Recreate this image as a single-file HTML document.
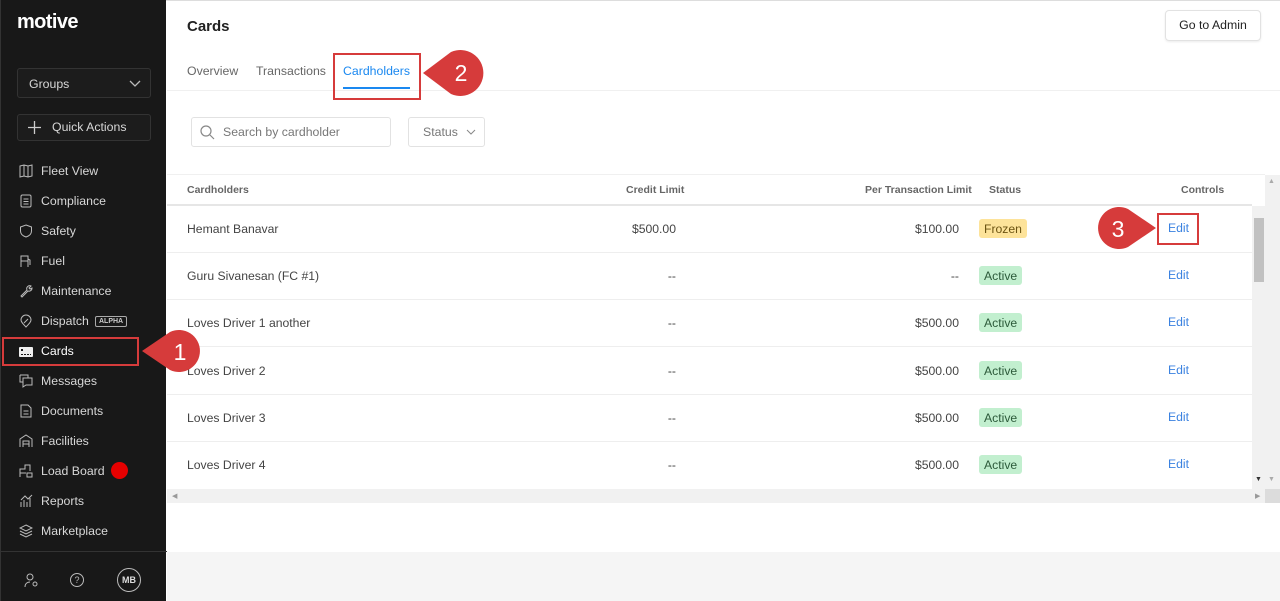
<!DOCTYPE html>
<html><head><meta charset="utf-8">
<style>
*{box-sizing:border-box;margin:0;padding:0}
body{width:1280px;height:601px;overflow:hidden;font-family:"Liberation Sans",Arial,sans-serif;background:#fff;position:relative;color:#333}
.a{position:absolute}
#sb{left:0;top:0;width:166px;height:601px;background:#181818;border-left:1px solid #333}
.nav{position:absolute;left:40px;font-size:12.3px;color:#d8d8d8;line-height:16px}
.ic{position:absolute;left:18px;width:14px;height:14px}
.th{position:absolute;top:184px;font-size:10.5px;font-weight:bold;color:#666}
.row{position:absolute;left:167px;width:1085px;height:47px;border-bottom:1px solid #eee}
.c{position:absolute;font-size:12.2px;color:#444;top:15px;line-height:16px}
.badge{position:absolute;left:812px;top:13px;height:19px;padding:0 5px;border-radius:3px;font-size:12.2px;line-height:19px;padding-top:1px}
.act{background:#c2efcf;color:#2c5a3a}
.edit{position:absolute;left:1001px;top:15px;color:#3b82e0;font-size:12.2px}
.box{position:absolute;border:2px solid #d63b3b}
</style></head><body>
<div class="a" style="left:166px;top:0;width:1114px;height:1px;background:#ddd"></div>
<div id="sb" class="a">
 <div class="a" style="left:16px;top:11px;font-size:20px;font-weight:bold;color:#fff;letter-spacing:-0.6px">motive</div>
 <div class="a" style="left:16px;top:68px;width:134px;height:30px;border:1px solid #333;border-radius:3px;background:#1c1c1c"></div>
 <div class="nav" style="left:28px;top:76px">Groups</div>
 <svg class="a" style="left:128px;top:80px" width="12" height="8"><path d="M1 1l5 5 5-5" stroke="#bbb" fill="none" stroke-width="1.3"/></svg>
 <div class="a" style="left:16px;top:114px;width:134px;height:27px;border:1px solid #333;border-radius:3px;background:#1c1c1c"></div>
 <svg class="a" style="left:27px;top:121px" width="13" height="13"><path d="M6.5 0v13M0 6.5h13" stroke="#ccc" stroke-width="1.3"/></svg>
 <div class="nav" style="left:51px;top:119px">Quick Actions</div>
 <svg class="ic" style="top:164px" viewBox="0 0 14 14"><path d="M1 2l4-1 4 1 4-1v11l-4 1-4-1-4 1z M5 1v11 M9 2v11" stroke="#bbb" fill="none"/></svg><div class="nav" style="top:163px">Fleet View</div>
 <svg class="ic" style="top:194px" viewBox="0 0 14 14"><rect x="2" y="1" width="10" height="12" rx="1.5" stroke="#bbb" fill="none"/><path d="M4.5 5h5M4.5 7.5h5M4.5 10h5" stroke="#bbb"/></svg><div class="nav" style="top:193px">Compliance</div>
 <svg class="ic" style="top:224px" viewBox="0 0 14 14"><path d="M7 1l5.5 2v4c0 3-2.5 5-5.5 6-3-1-5.5-3-5.5-6V3z" stroke="#bbb" fill="none"/></svg><div class="nav" style="top:223px">Safety</div>
 <svg class="ic" style="top:254px" viewBox="0 0 14 14"><path d="M2 13V2h7v11M2 7h7M9 5l2 1v5" stroke="#bbb" fill="none"/></svg><div class="nav" style="top:253px">Fuel</div>
 <svg class="ic" style="top:284px" viewBox="0 0 14 14"><path d="M2 12l6-6a3 3 0 014-4l-2 2 1 1 2-1a3 3 0 01-4 3l-6 6z" stroke="#bbb" fill="none"/></svg><div class="nav" style="top:283px">Maintenance</div>
 <svg class="ic" style="top:314px" viewBox="0 0 14 14"><path d="M7 13C4 10 2 8 2 6a5 5 0 0110 0c0 2-2 4-5 7zM5 9l4-4" stroke="#bbb" fill="none"/></svg><div class="nav" style="top:313px">Dispatch</div>
 <div class="a" style="left:94px;top:316px;border:1px solid #aaa;font-size:7px;font-weight:bold;color:#ccc;padding:1px 3px;border-radius:2px">ALPHA</div>
 <svg class="ic" style="top:345px" viewBox="0 0 14 14"><rect x="0" y="2" width="14" height="10" rx="1" fill="#eee"/><rect x="2" y="4" width="2" height="2" fill="#181818"/><path d="M2 9.5h10" stroke="#181818" stroke-dasharray="2 1"/></svg><div class="nav" style="top:343px;color:#fff">Cards</div>
 <svg class="ic" style="top:374px" viewBox="0 0 14 14"><path d="M1 1h8v3M4 4h9v7H7l-3 2v-2H4z M1 1v7h3" stroke="#bbb" fill="none"/></svg><div class="nav" style="top:373px">Messages</div>
 <svg class="ic" style="top:404px" viewBox="0 0 14 14"><path d="M2 1h7l3 3v9H2z M4.5 7h5M4.5 10h5" stroke="#bbb" fill="none"/></svg><div class="nav" style="top:403px">Documents</div>
 <svg class="ic" style="top:434px" viewBox="0 0 14 14"><path d="M1 13V5l6-4 6 4v8M4 13V7h6v6M4 10h6" stroke="#bbb" fill="none"/></svg><div class="nav" style="top:433px">Facilities</div>
 <svg class="ic" style="top:464px" viewBox="0 0 14 14"><path d="M1 13V5h5V1h5v6M1 9h6M8 9h5v4H8z" stroke="#bbb" fill="none"/></svg><div class="nav" style="top:463px">Load Board</div>
 <div class="a" style="left:110px;top:462px;width:17px;height:17px;border-radius:50%;background:#e60000"></div>
 <svg class="ic" style="top:494px" viewBox="0 0 14 14"><path d="M2 13V8M5 13V6M8 13V8M11 13V4M2 6l4-4 3 3 4-4" stroke="#bbb" fill="none"/></svg><div class="nav" style="top:493px">Reports</div>
 <svg class="ic" style="top:524px" viewBox="0 0 14 14"><path d="M7 1l6 3-6 3-6-3zM1 7l6 3 6-3M1 10l6 3 6-3" stroke="#bbb" fill="none"/></svg><div class="nav" style="top:523px">Marketplace</div>
 <div class="a" style="left:0;top:551px;width:166px;height:1px;background:#333"></div>
 <svg class="a" style="left:23px;top:573px" width="16" height="16"><circle cx="6" cy="4" r="3" stroke="#bbb" fill="none"/><path d="M1 14c0-4 3-5 5-5M11 9a2 2 0 110 4 2 2 0 010-4" stroke="#bbb" fill="none"/></svg>
 <div class="a" style="left:69px;top:573px;width:14px;height:14px;border:1px solid #bbb;border-radius:50%;color:#bbb;font-size:9px;text-align:center;line-height:12px">?</div>
 <div class="a" style="left:116px;top:568px;width:24px;height:24px;border:1px solid #bbb;border-radius:50%;color:#ddd;font-size:9px;font-weight:bold;text-align:center;line-height:22px">MB</div>
</div>
<div class="a" style="left:187px;top:18px;font-size:15px;color:#222;font-weight:600">Cards</div>
<div class="a" style="left:1165px;top:10px;width:96px;height:31px;border:1px solid #e2e2e2;border-radius:4px;font-size:12.3px;color:#222;text-align:center;line-height:29px;box-shadow:0 1px 2px rgba(0,0,0,.08)">Go to Admin</div>
<div class="a" style="left:187px;top:64px;font-size:12.3px;color:#666">Overview</div>
<div class="a" style="left:256px;top:64px;font-size:12.3px;color:#666">Transactions</div>
<div class="a" style="left:343px;top:64px;font-size:12.3px;color:#1a88f0">Cardholders</div>
<div class="a" style="left:343px;top:87px;width:67px;height:2px;background:#1a88f0"></div>
<div class="a" style="left:167px;top:90px;width:1113px;height:1px;background:#f0f0f0"></div>
<div class="a" style="left:191px;top:117px;width:200px;height:30px;border:1px solid #e2e2e2;border-radius:3px"></div>
<svg class="a" style="left:200px;top:125px" width="15" height="15"><circle cx="6" cy="6" r="5" stroke="#888" fill="none" stroke-width="1.2"/><path d="M10 10l4 4" stroke="#888" stroke-width="1.2"/></svg>
<div class="a" style="left:223px;top:125px;font-size:12.3px;color:#777">Search by cardholder</div>
<div class="a" style="left:408px;top:117px;width:77px;height:30px;border:1px solid #e2e2e2;border-radius:3px"></div>
<div class="a" style="left:423px;top:125px;font-size:12.3px;color:#777">Status</div>
<svg class="a" style="left:466px;top:129px" width="10" height="6"><path d="M1 1l4 4 4-4" stroke="#888" fill="none"/></svg>
<div class="a" style="left:167px;top:174px;width:1098px;height:1px;background:#f0f0f0"></div>
<div class="th" style="left:187px">Cardholders</div>
<div class="th" style="left:626px">Credit Limit</div>
<div class="th" style="left:865px">Per Transaction Limit</div>
<div class="th" style="left:989px">Status</div>
<div class="th" style="left:1181px">Controls</div>
<div class="a" style="left:167px;top:204px;width:1085px;height:2px;background:#e6e6e6"></div>

<div class="row" style="top:206px"><div class="c" style="left:20px">Hemant Banavar</div><div class="c" style="right:576px">$500.00</div><div class="c" style="right:293px">$100.00</div><div class="badge" style="background:#fde39a;color:#6b5312">Frozen</div><div class="edit">Edit</div></div>
<div class="row" style="top:253px"><div class="c" style="left:20px">Guru Sivanesan (FC #1)</div><div class="c" style="right:576px">--</div><div class="c" style="right:293px">--</div><div class="badge act">Active</div><div class="edit">Edit</div></div>
<div class="row" style="top:300px"><div class="c" style="left:20px">Loves Driver 1 another</div><div class="c" style="right:576px">--</div><div class="c" style="right:293px">$500.00</div><div class="badge act">Active</div><div class="edit">Edit</div></div>
<div class="row" style="top:348px"><div class="c" style="left:20px">Loves Driver 2</div><div class="c" style="right:576px">--</div><div class="c" style="right:293px">$500.00</div><div class="badge act">Active</div><div class="edit">Edit</div></div>
<div class="row" style="top:395px"><div class="c" style="left:20px">Loves Driver 3</div><div class="c" style="right:576px">--</div><div class="c" style="right:293px">$500.00</div><div class="badge act">Active</div><div class="edit">Edit</div></div>
<div class="row" style="top:442px;border:none"><div class="c" style="left:20px">Loves Driver 4</div><div class="c" style="right:576px">--</div><div class="c" style="right:293px">$500.00</div><div class="badge act">Active</div><div class="edit">Edit</div></div>

<div class="a" style="left:1252px;top:206px;width:13px;height:283px;background:#f1f1f1"></div>
<div class="a" style="left:1254px;top:218px;width:10px;height:64px;background:#c1c1c1"></div>
<div class="a" style="left:1265px;top:175px;width:15px;height:328px;background:#f1f1f1"></div>
<div class="a" style="left:1265px;top:489px;width:15px;height:14px;background:#dcdcdc"></div>
<div class="a" style="left:167px;top:489px;width:1098px;height:14px;background:#f1f1f1"></div>
<div class="a" style="left:172px;top:492px;font-size:7px;color:#999">◀</div>
<div class="a" style="left:1255px;top:476px;font-size:7px;color:#333">▼</div>
<div class="a" style="left:1255px;top:492px;font-size:7px;color:#999">▶</div>
<div class="a" style="left:1268px;top:178px;font-size:7px;color:#aaa">▲</div>
<div class="a" style="left:1268px;top:476px;font-size:7px;color:#aaa">▼</div>
<div class="a" style="left:167px;top:552px;width:1113px;height:49px;background:#f5f5f5"></div>

<div class="box" style="left:2px;top:337px;width:137px;height:29px"></div>
<div class="box" style="left:333px;top:53px;width:88px;height:47px"></div>
<div class="box" style="left:1157px;top:213px;width:42px;height:32px"></div>
<svg class="a" style="left:140px;top:329px" width="66" height="44"><path d="M2 22L30 3a21 21 0 110 38z" fill="#d63b3b"/><text x="40" y="31" font-family="Liberation Sans" font-size="23" fill="#fff" text-anchor="middle">1</text></svg>
<svg class="a" style="left:421px;top:49px" width="66" height="48"><path d="M2 24L30 3a23 23 0 110 42z" fill="#d63b3b"/><text x="40" y="32" font-family="Liberation Sans" font-size="23" fill="#fff" text-anchor="middle">2</text></svg>
<svg class="a" style="left:1092px;top:206px" width="66" height="44"><path d="M64 22L36 3a21 21 0 100 38z" fill="#d63b3b"/><text x="26" y="31" font-family="Liberation Sans" font-size="23" fill="#fff" text-anchor="middle">3</text></svg>
</body></html>
